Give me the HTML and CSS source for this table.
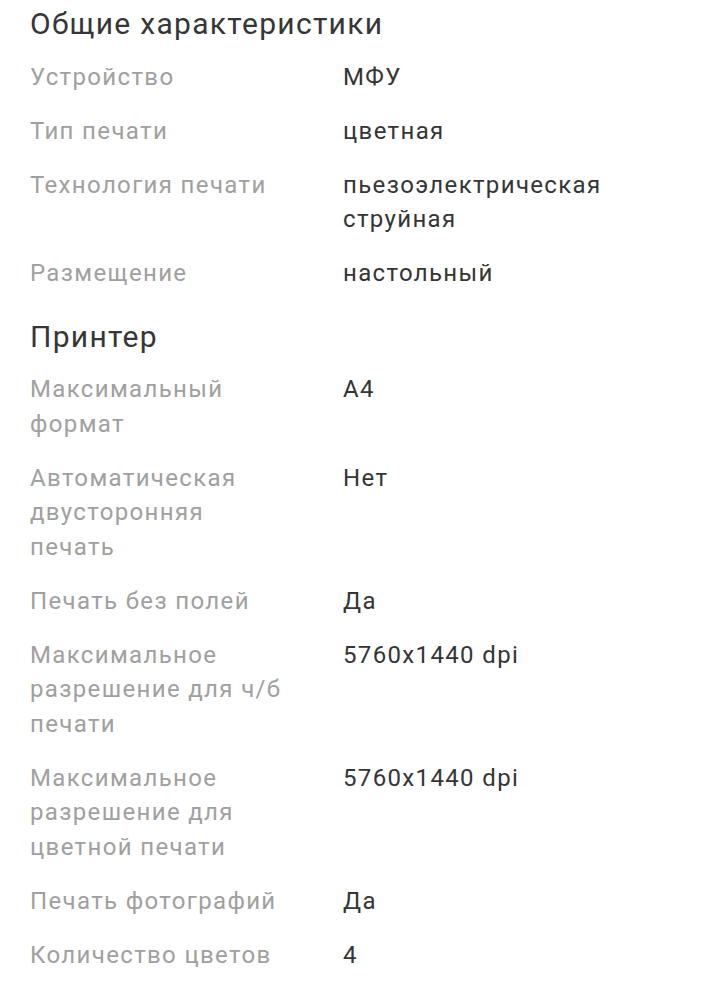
FILE: index.html
```html
<!DOCTYPE html>
<html lang="ru">
<head>
<meta charset="utf-8">
<title>Характеристики</title>
<link rel="stylesheet" href="styles.css">
</head>
<body>
<main class="specs">
  <section class="group">
    <h2 class="group-title">Общие характеристики</h2>
    <dl class="rows">
      <dt>Устройство</dt><dd>МФУ</dd>
      <dt>Тип печати</dt><dd>цветная</dd>
      <dt>Технология печати</dt><dd>пьезоэлектрическая струйная</dd>
      <dt>Размещение</dt><dd>настольный</dd>
    </dl>
  </section>
  <section class="group">
    <h2 class="group-title">Принтер</h2>
    <dl class="rows">
      <dt>Максимальный формат</dt><dd>A4</dd>
      <dt>Автоматическая двусторонняя печать</dt><dd>Нет</dd>
      <dt>Печать без полей</dt><dd>Да</dd>
      <dt>Максимальное разрешение для ч/б печати</dt><dd>5760x1440 dpi</dd>
      <dt>Максимальное разрешение для цветной печати</dt><dd>5760x1440 dpi</dd>
      <dt>Печать фотографий</dt><dd>Да</dd>
      <dt>Количество цветов</dt><dd>4</dd>
      <dt>Минимальный объем капли</dt><dd>3.3 пл</dd>
    </dl>
  </section>
</main>
</body>
</html>
```
FILE: styles.css
```css
html, body {
  margin: 0;
  padding: 0;
  background: #ffffff;
}
body {
  font-family: Roboto, "Noto Sans", "Liberation Sans", sans-serif;
  color: #333333;
}
.specs {
  padding: 4px 30px 0 30px;
  display: flex;
  flex-direction: column;
  gap: 26px;
}
.group-title {
  margin: 0 0 15.5px 0;
  font-size: 30px;
  line-height: 40px;
  font-weight: 400;
  letter-spacing: 1.3px;
  color: #363636;
}
.rows {
  margin: 0;
  display: grid;
  grid-template-columns: 260px 1fr;
  column-gap: 53px;
  row-gap: 19.5px;
  font-size: 24px;
  line-height: 34.5px;
  letter-spacing: 1.35px;
}
.rows dt {
  color: #a0a0a0;
}
.rows dd {
  margin: 0;
  color: #353535;
  max-width: 290px;
}
```
